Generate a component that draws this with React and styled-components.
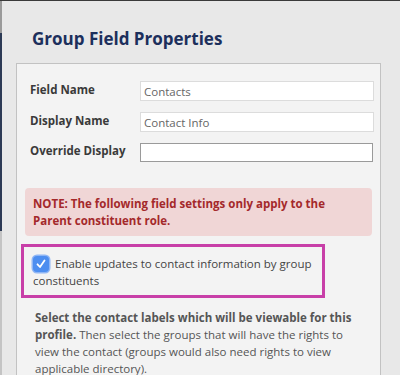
import React, { useState } from "react";
import styled, { createGlobalStyle } from "styled-components";

const GlobalStyle = createGlobalStyle`
  html, body {
    margin: 0;
    padding: 0;
    width: 400px;
    height: 375px;
    overflow: hidden;
    background: #e9e9e9;
  }
`;

const Frame = styled.div`
  width: 400px;
  height: 375px;
  box-sizing: border-box;
  border-top: 1px solid #3a3a3a;
  padding-left: 2px;
  background: linear-gradient(
    to bottom,
    #9a9a9a 0,
    #9a9a9a 32px,
    #2c3a55 32px,
    #2c3a55 230px,
    #c4c4c4 230px
  );
`;

const Page = styled.div`
  height: 100%;
  background: #e8e8e8;
  padding: 26px 0 0 14px;
  box-sizing: border-box;
  font-family: "Open Sans", "Liberation Sans", sans-serif;
`;

const Title = styled.h1`
  margin: 0 0 0 16px;
  font-size: 17px;
  line-height: 24px;
  font-weight: bold;
  color: #1c2f5c;
`;

const Panel = styled.div`
  margin-top: 12px;
  width: 365px;
  height: 320px;
  box-sizing: border-box;
  border: 1px solid #c2c2c2;
  background: #f3f3f3;
  padding: 17px 6px 0 13px;
`;

const FieldGrid = styled.div`
  display: grid;
  grid-template-columns: 110px 234px;
  row-gap: 11px;
  align-items: center;
`;

const Label = styled.label`
  font-size: 11.5px;
  font-weight: bold;
  color: #3a3a3a;
  transform: translateY(-2px);
`;

const Input = styled.input`
  box-sizing: border-box;
  height: ${(p) => (p.$dark ? "19px" : "20px")};
  width: ${(p) => (p.$dark ? "233px" : "234px")};
  border: 1px solid ${(p) => (p.$dark ? "#9a9a9a" : "#dcdcdc")};
  background: #fff;
  padding: 0 3px;
  font-family: inherit;
  font-size: 11.5px;
  color: #666;
  outline: none;
`;

const Note = styled.div`
  margin: 26px 0 0 -5px;
  width: 347px;
  box-sizing: border-box;
  background: #f0d6d6;
  border-radius: 4px;
  padding: 7px 8px 7px;
  font-size: 11.5px;
  line-height: 17px;
  font-weight: bold;
  color: #a4292b;
`;

const Highlight = styled.div`
  margin: 8px 0 0 -9px;
  width: 304px;
  box-sizing: border-box;
  border: 3px solid #c83fa8;
  padding: 8px 8px 6px 9px;
  font-size: 11.5px;
  line-height: 17px;
  color: #444;
`;

const Check = styled.span`
  display: inline-block;
  vertical-align: -4px;
  width: 16px;
  height: 16px;
  margin-right: 6px;
  border-radius: 4px;
  background: #4d8ef0;
  box-shadow: 0 0 0 1.5px #8fb6f5;
  text-align: center;
`;

const Help = styled.p`
  margin: 11px 0 0 5px;
  width: 320px;
  font-size: 11.5px;
  line-height: 17px;
  color: #555;
`;

const CheckIcon = () => (
  <svg width="16" height="16" viewBox="0 0 16 16">
    <path
      d="M4.5 8.3 L7 11 L11.5 4.5"
      fill="none"
      stroke="#fff"
      strokeWidth="1.8"
      strokeLinecap="round"
      strokeLinejoin="round"
    />
  </svg>
);

const App = () => {
  const [fieldName, setFieldName] = useState("Contacts");
  const [displayName, setDisplayName] = useState("Contact Info");
  const [override, setOverride] = useState("");

  return (
    <Frame>
      <GlobalStyle />
      <Page>
        <Title>Group Field Properties</Title>
        <Panel>
          <FieldGrid>
            <Label>Field Name</Label>
            <Input value={fieldName} onChange={(e) => setFieldName(e.target.value)} />
            <Label>Display Name</Label>
            <Input value={displayName} onChange={(e) => setDisplayName(e.target.value)} />
            <Label>Override Display</Label>
            <Input $dark value={override} onChange={(e) => setOverride(e.target.value)} />
          </FieldGrid>
          <Note>
            NOTE: The following field settings only apply to the Parent
            constituent role.
          </Note>
          <Highlight>
            <Check>
              <CheckIcon />
            </Check>
            Enable updates to contact information by group constituents
          </Highlight>
          <Help>
            <b>Select the contact labels which will be viewable for this profile.</b>{" "}
            Then select the groups that will have the rights to view the contact
            (groups would also need rights to view applicable directory).
          </Help>
        </Panel>
      </Page>
    </Frame>
  );
};

export default App;
